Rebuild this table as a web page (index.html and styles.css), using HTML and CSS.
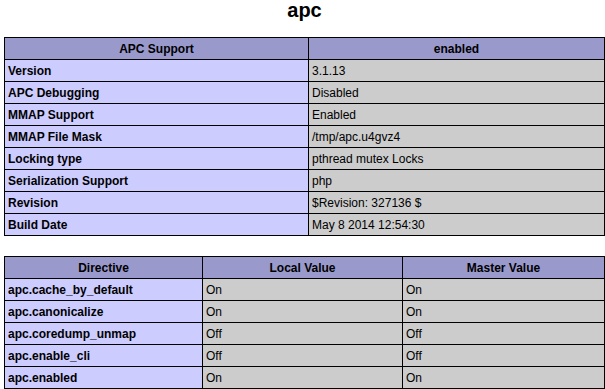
FILE: index.html
```html
<!DOCTYPE html>
<html>
<head>
<meta charset="utf-8">
<title>apc</title>
<link rel="stylesheet" href="styles.css">
</head>
<body>
<div class="page">
  <h2 class="title">apc</h2>
  <table class="info info-support">
    <colgroup><col class="c-name"><col></colgroup>
    <tr class="h"><th>APC Support</th><th>enabled</th></tr>
    <tr><td class="e">Version</td><td class="v">3.1.13</td></tr>
    <tr><td class="e">APC Debugging</td><td class="v">Disabled</td></tr>
    <tr><td class="e">MMAP Support</td><td class="v">Enabled</td></tr>
    <tr><td class="e">MMAP File Mask</td><td class="v">/tmp/apc.u4gvz4</td></tr>
    <tr><td class="e">Locking type</td><td class="v">pthread mutex Locks</td></tr>
    <tr><td class="e">Serialization Support</td><td class="v">php</td></tr>
    <tr><td class="e">Revision</td><td class="v">$Revision: 327136 $</td></tr>
    <tr><td class="e">Build Date</td><td class="v">May 8 2014 12:54:30</td></tr>
  </table>
  <table class="info info-directives">
    <colgroup><col class="c-dir"><col class="c-local"><col></colgroup>
    <tr class="h"><th>Directive</th><th>Local Value</th><th>Master Value</th></tr>
    <tr><td class="e">apc.cache_by_default</td><td class="v">On</td><td class="v">On</td></tr>
    <tr><td class="e">apc.canonicalize</td><td class="v">On</td><td class="v">On</td></tr>
    <tr><td class="e">apc.coredump_unmap</td><td class="v">Off</td><td class="v">Off</td></tr>
    <tr><td class="e">apc.enable_cli</td><td class="v">Off</td><td class="v">Off</td></tr>
    <tr><td class="e">apc.enabled</td><td class="v">On</td><td class="v">On</td></tr>
  </table>
</div>
</body>
</html>
```
FILE: styles.css
```css
html, body {
  margin: 0;
  padding: 0;
  background: #fff;
  color: #000;
  font-family: "Liberation Sans", Arial, sans-serif;
}
.page {
  padding: 0 0 0 4px;
}
.title {
  margin: 0 0 17px 0;
  font-size: 20px;
  line-height: 20px;
  text-align: center;
  font-weight: bold;
  width: 601px;
}
.info {
  border-collapse: collapse;
  width: 601px;
  table-layout: fixed;
}
.info-directives {
  margin-top: 20px;
}
.info th, .info td {
  border: 1px solid #000;
  font-size: 12px;
  line-height: 15px;
  padding: 4px 3px 2px 3px;
  vertical-align: baseline;
  text-align: left;
  white-space: nowrap;
  overflow: hidden;
}
.h th {
  background: #9999cc;
  font-weight: bold;
  text-align: center;
}
.e {
  background: #ccccff;
  font-weight: bold;
}
.v {
  background: #cccccc;
}
.c-name { width: 304px; }
.c-dir { width: 198px; }
.c-local { width: 200px; }
```
